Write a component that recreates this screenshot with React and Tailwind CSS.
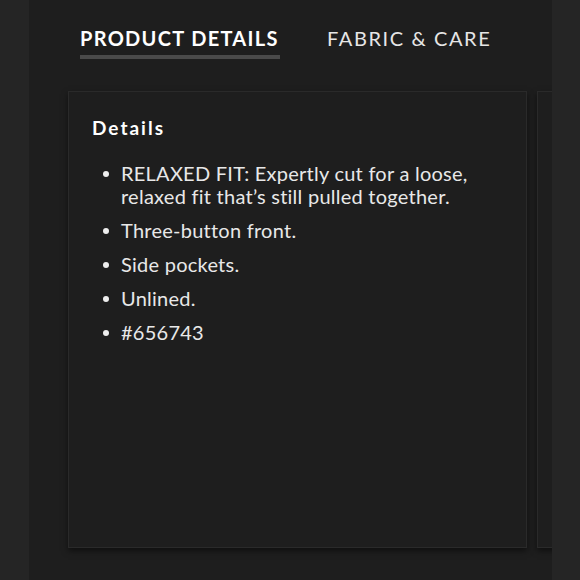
import React from "react";

const items = [
  "RELAXED FIT: Expertly cut for a loose, relaxed fit that’s still pulled together.",
  "Three-button front.",
  "Side pockets.",
  "Unlined.",
  "#656743",
];

const App = () => {
  return (
    <div
      className="flex h-[580px] w-[580px] overflow-hidden bg-[#1e1e1e] text-[#ececec]"
      style={{ fontFamily: "Lato, 'Noto Sans', sans-serif" }}
    >
      {/* left edge */}
      <div className="w-[29px] shrink-0 bg-[#252525]" />

      {/* main column */}
      <div className="flex w-[523px] shrink-0 flex-col overflow-hidden bg-[#1e1e1e]">
        {/* Tabs */}
        <div className="flex gap-[47px] pl-[51px] pt-[25px]">
          <div className="flex w-[200px] flex-col">
            <span className="whitespace-nowrap text-[20px] font-bold leading-[26px] tracking-[1.3px] text-white">
              PRODUCT DETAILS
            </span>
            <div className="mt-[4px] h-[4px] w-[200px] bg-[#4a4a4a]" />
          </div>
          <span className="text-[20px] leading-[26px] tracking-[1.6px] text-[#e6e6e6]">
            FABRIC &amp; CARE
          </span>
        </div>

        {/* Cards */}
        <div className="mt-[32px] flex gap-[10px] pl-[39px]">
          <div className="h-[457px] w-[459px] shrink-0 border border-[#2a2a2a] bg-[#1e1e1e] px-[23px] pt-[24px] shadow-[0_3px_6px_rgba(0,0,0,0.5)]">
            <h3 className="text-[19px] font-bold leading-[24px] tracking-[2px] text-white">
              Details
            </h3>
            <ul className="mt-[22px] flex flex-col gap-[11px] pl-[29px]">
              {items.map((t) => (
                <li key={t} className="relative text-[20px] leading-[23px] tracking-[0.25px] text-[#e8e8e8]">
                  <span className="absolute left-[-18px] top-[9px] h-[6px] w-[6px] rounded-full bg-[#eeeeee]" />
                  {t}
                </li>
              ))}
            </ul>
          </div>
          <div className="h-[457px] w-[200px] shrink-0 border border-[#2a2a2a] bg-[#1e1e1e] shadow-[0_3px_6px_rgba(0,0,0,0.5)]" />
        </div>
      </div>

      {/* right edge */}
      <div className="w-[28px] shrink-0 bg-[#252525]" />
    </div>
  );
};

export default App;
